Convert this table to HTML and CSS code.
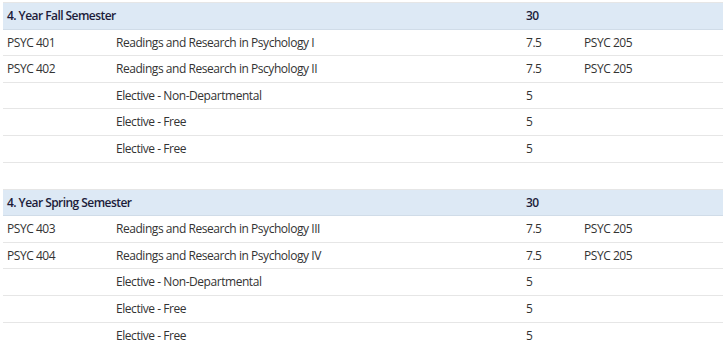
FILE: index.html
```html
<!DOCTYPE html>
<html>
<head>
<meta charset="utf-8">
<link rel="stylesheet" href="styles.css">
</head>
<body>
<table class="sem">
  <colgroup><col class="c1"><col class="c2"><col class="c3"><col class="c4"></colgroup>
  <tr class="head"><th colspan="2">4. Year Fall Semester</th><th>30</th><th></th></tr>
  <tr><td>PSYC 401</td><td>Readings and Research in Psychology I</td><td>7.5</td><td>PSYC 205</td></tr>
  <tr><td>PSYC 402</td><td>Readings and Research in Pscyhology II</td><td>7.5</td><td>PSYC 205</td></tr>
  <tr><td></td><td>Elective - Non-Departmental</td><td>5</td><td></td></tr>
  <tr><td></td><td>Elective - Free</td><td>5</td><td></td></tr>
  <tr><td></td><td>Elective - Free</td><td>5</td><td></td></tr>
</table>
<table class="sem second">
  <colgroup><col class="c1"><col class="c2"><col class="c3"><col class="c4"></colgroup>
  <tr class="head"><th colspan="2">4. Year Spring Semester</th><th>30</th><th></th></tr>
  <tr><td>PSYC 403</td><td>Readings and Research in Psychology III</td><td>7.5</td><td>PSYC 205</td></tr>
  <tr><td>PSYC 404</td><td>Readings and Research in Psychology IV</td><td>7.5</td><td>PSYC 205</td></tr>
  <tr><td></td><td>Elective - Non-Departmental</td><td>5</td><td></td></tr>
  <tr><td></td><td>Elective - Free</td><td>5</td><td></td></tr>
  <tr><td></td><td>Elective - Free</td><td>5</td><td></td></tr>
</table>
</body>
</html>
```
FILE: styles.css
```css
html, body {
  margin: 0;
  background: #ffffff;
}
body {
  padding: 2px 3px 0 3px;
  font-family: "Open Sans", "Liberation Sans", sans-serif;
  font-size: 12px;
  letter-spacing: -0.45px;
  color: #333333;
}
.sem {
  width: 720px;
  border-collapse: collapse;
  table-layout: fixed;
  border-top: 1px solid #e6e6e6;
}
.second {
  margin-top: 26px;
}
.c1 { width: 109px; }
.c2 { width: 410px; }
.c3 { width: 58px; }
.c4 { width: auto; }
.sem th, .sem td {
  text-align: left;
  padding: 5px 4px;
  line-height: 15.6px;
  border-bottom: 1px solid #e6e6e6;
  white-space: nowrap;
}
.head th {
  background: #dde9f5;
  font-weight: 600;
  letter-spacing: -0.55px;
  color: #1c1c3a;
  border-bottom: 1px solid #d0dce8;
}
```
